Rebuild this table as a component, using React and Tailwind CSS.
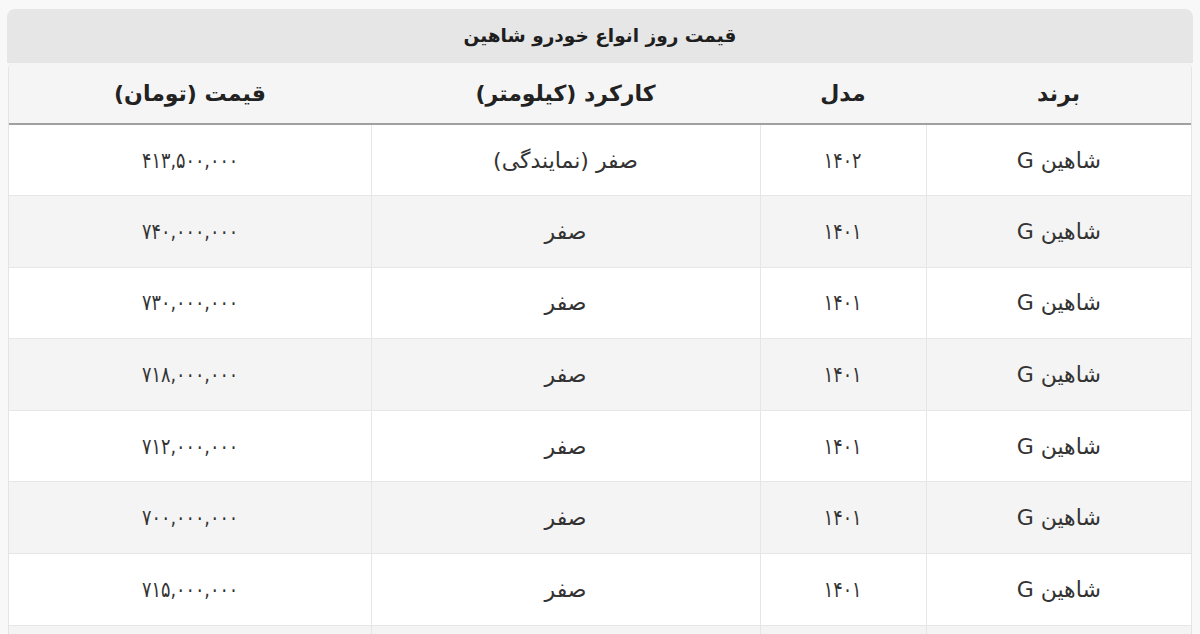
import React from "react";

const rows = [
  ["شاهین G", "۱۴۰۲", "صفر (نمایندگی)", "۴۱۳,۵۰۰,۰۰۰"],
  ["شاهین G", "۱۴۰۱", "صفر", "۷۴۰,۰۰۰,۰۰۰"],
  ["شاهین G", "۱۴۰۱", "صفر", "۷۳۰,۰۰۰,۰۰۰"],
  ["شاهین G", "۱۴۰۱", "صفر", "۷۱۸,۰۰۰,۰۰۰"],
  ["شاهین G", "۱۴۰۱", "صفر", "۷۱۲,۰۰۰,۰۰۰"],
  ["شاهین G", "۱۴۰۱", "صفر", "۷۰۰,۰۰۰,۰۰۰"],
  ["شاهین G", "۱۴۰۱", "صفر", "۷۱۵,۰۰۰,۰۰۰"],
];

export default function App() {
  return (
    <div
      dir="rtl"
      className="w-[1200px] h-[634px] overflow-hidden bg-[#f8f8f8] pt-[9px] px-[7px]"
      style={{ fontFamily: '"DejaVu Sans", "Noto Sans", sans-serif' }}
    >
      <div className="h-[54px] bg-[#e6e6e6] rounded-t-[8px] flex items-center justify-center text-[18.5px] font-bold text-[#1e1e1e]">
        قیمت روز انواع خودرو شاهین
      </div>
      <div className="mx-[1px] border-x border-[#e4e4e4] rounded-t-[6px] overflow-hidden">
        <table className="w-full border-collapse table-fixed">
          <colgroup>
            <col className="w-[265px]" />
            <col className="w-[166px]" />
            <col className="w-[389px]" />
            <col />
          </colgroup>
          <thead>
            <tr className="h-[61px] bg-[#f5f5f5] border-b-2 border-[#a0a0a0]">
              <th className="font-bold text-[22px] text-[#222] align-middle">برند</th>
              <th className="font-bold text-[22px] text-[#222] align-middle">مدل</th>
              <th className="font-bold text-[22px] text-[#222] align-middle">کارکرد (کیلومتر)</th>
              <th className="font-bold text-[22px] text-[#222] align-middle">قیمت (تومان)</th>
            </tr>
          </thead>
          <tbody>
            {rows.map((r, i) => (
              <tr
                key={i}
                className={`h-[71.6px] ${i % 2 === 1 ? "bg-[#f4f4f4]" : "bg-white"} border-b border-[#e6e6e6]`}
              >
                <td className="text-center align-middle text-[22px] text-[#333] border-l border-[#e6e6e6]">{r[0]}</td>
                <td className="text-center align-middle text-[22px] text-[#333] border-l border-[#e6e6e6]">
                  <span className="inline-block scale-x-[0.8]">{r[1]}</span>
                </td>
                <td className="text-center align-middle text-[22px] text-[#333] border-l border-[#e6e6e6]">{r[2]}</td>
                <td className="text-center align-middle text-[22px] text-[#333]">
                  <span className="inline-block scale-x-[0.8]">{r[3]}</span>
                </td>
              </tr>
            ))}
            <tr className="h-[71.6px] bg-[#f4f4f4]">
              <td className="border-l border-[#e6e6e6]"></td>
              <td className="border-l border-[#e6e6e6]"></td>
              <td className="border-l border-[#e6e6e6]"></td>
              <td></td>
            </tr>
          </tbody>
        </table>
      </div>
    </div>
  );
}
